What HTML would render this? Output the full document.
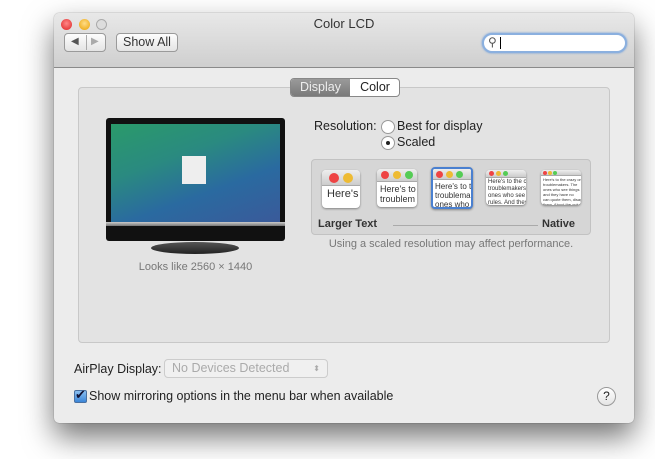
<!DOCTYPE html>
<html><head><style>
*{margin:0;padding:0;box-sizing:border-box}
body{width:655px;height:459px;background:#fff;font-family:"Liberation Sans",sans-serif;position:relative;overflow:hidden;font-size:12px;color:#222}
.abs{position:absolute}
.win{left:54px;top:13px;width:580px;height:410px;background:#ececec;border-radius:5px;box-shadow:0 14px 30px rgba(0,0,0,.55),0 0 1px rgba(0,0,0,.5);overflow:hidden}
.tb{left:0;top:0;width:580px;height:55px;background:linear-gradient(#e8e8e8,#cfcfcf);border-bottom:1px solid #8a8a8a}
.dot{width:12px;height:12px;border-radius:50%}
.btn{background:linear-gradient(#fdfdfd,#e4e4e4);border:1px solid #9a9a9a;border-radius:4px}
.thumb{background:#fff;border-radius:4px;box-shadow:0 1px 2px rgba(0,0,0,.4);overflow:hidden;font-size:9px;line-height:10px;color:#333}
.thumb .bar{height:11px;background:linear-gradient(#eee,#ccc);border-bottom:1px solid #aaa;position:relative}
.thumb .txt{white-space:nowrap}
.r{background:#e44}.y{background:#eb3}.g{background:#5c5}
.bar i{position:absolute;border-radius:50%}
</style></head><body>
<div class="abs win">
 <div class="abs tb">
  <div class="abs dot" style="left:7px;top:6px;width:11px;height:11px;background:radial-gradient(circle at 50% 40%,#f88,#d22)"></div>
  <div class="abs dot" style="left:25px;top:6px;width:11px;height:11px;background:radial-gradient(circle at 50% 40%,#fd8,#e9a000)"></div>
  <div class="abs dot" style="left:42px;top:6px;width:11px;height:11px;border:1px solid #aaa;background:#ddd"></div>
  <div class="abs" style="left:0;width:580px;top:3px;text-align:center;font-size:13px;color:#333">Color LCD</div>
  <div class="abs btn" style="left:10px;top:20px;width:42px;height:19px"><span class="abs" style="left:6px;top:2px;font-size:10px;color:#555">◀</span><span class="abs" style="left:21px;top:1px;width:1px;height:15px;background:#aaa"></span><span class="abs" style="left:26px;top:2px;font-size:10px;color:#aaa">▶</span></div>
  <div class="abs btn" style="left:62px;top:20px;width:62px;height:19px;font-size:12.5px;text-align:center;line-height:17px;color:#333">Show All</div>
  <div class="abs" style="left:428px;top:20px;width:145px;height:20px;border-radius:10px;background:#fff;border:2px solid #8bb0df;box-shadow:0 0 2px #6a9ad8"><span class="abs" style="left:4px;top:0px;font-size:12px;color:#555">&#9906;</span><span class="abs" style="left:16px;top:2px;width:1px;height:12px;background:#000"></span></div>
 </div>
 <div class="abs" style="left:24px;top:74px;width:532px;height:256px;background:#e3e3e3;border:1px solid #c8c8c8;border-radius:4px"></div>
 <div class="abs" style="left:236px;top:65px;width:110px;height:19px;border-radius:4px;border:1px solid #888;background:#fff;overflow:hidden;font-size:12.5px;line-height:17px">
  <div class="abs" style="left:0;top:0;width:59px;height:17px;background:linear-gradient(#9a9a9a,#7a7a7a);color:#eee;text-align:center">Display</div>
  <div class="abs" style="left:59px;top:0;width:50px;height:17px;text-align:center;color:#222">Color</div>
 </div>
 <!-- monitor -->
 <div class="abs" style="left:52px;top:105px;width:179px;height:123px;background:#111;border-radius:3px"></div>
 <div class="abs" style="left:57px;top:111px;width:169px;height:98px;background:linear-gradient(160deg,#2a9a6a 0%,#2a8a80 35%,#2a6aa0 65%,#3a5a9a 100%)"></div>
 <div class="abs" style="left:128px;top:143px;width:24px;height:28px;background:#eee"></div>
 <div class="abs" style="left:52px;top:209px;width:179px;height:4px;background:linear-gradient(#ccc,#777)"></div>
 <div class="abs" style="left:97px;top:229px;width:88px;height:12px;border-radius:50%;background:linear-gradient(#555,#222)"></div>
 <div class="abs" style="left:52px;top:248px;width:179px;text-align:center;font-size:11px;color:#777">Looks like 2560 × 1440</div>
 <!-- resolution -->
 <div class="abs" style="left:260px;top:106px;font-size:12.5px">Resolution:</div>
 <div class="abs" style="left:327px;top:107px;width:14px;height:14px;border-radius:50%;border:1px solid #999;background:#fff"></div>
 <div class="abs" style="left:343px;top:106px;font-size:12.5px">Best for display</div>
 <div class="abs" style="left:327px;top:123px;width:14px;height:14px;border-radius:50%;border:1px solid #999;background:#fff"><div class="abs" style="left:4px;top:4px;width:4px;height:4px;border-radius:50%;background:#222"></div></div>
 <div class="abs" style="left:343px;top:122px;font-size:12.5px">Scaled</div>
 <div class="abs" style="left:257px;top:146px;width:280px;height:76px;background:#d6d6d6;border:1px solid #c2c2c2;border-radius:4px">
  <div class="abs thumb" style="left:10px;top:10px;width:38px;height:38px"><div class="bar" style="height:16px"><i class="r" style="left:7px;top:3px;width:10px;height:10px"></i><i class="y" style="left:21px;top:3px;width:10px;height:10px"></i></div><div class="txt" style="padding:3px 5px;font-size:11px">Here's</div></div>
  <div class="abs thumb" style="left:65px;top:9px;width:40px;height:38px"><div class="bar" style="height:13px"><i class="r" style="left:4px;top:2px;width:8px;height:8px"></i><i class="y" style="left:16px;top:2px;width:8px;height:8px"></i><i class="g" style="left:28px;top:2px;width:8px;height:8px"></i></div><div class="txt" style="padding:2px 3px">Here's to<br>troublem</div></div>
  <div class="abs thumb" style="left:119px;top:7px;width:42px;height:42px;border:2px solid #4a80d0"><div class="bar"><i class="r" style="left:3px;top:2px;width:7px;height:7px"></i><i class="y" style="left:13px;top:2px;width:7px;height:7px"></i><i class="g" style="left:23px;top:2px;width:7px;height:7px"></i></div><div class="txt" style="padding:2px 2px;font-size:8px;line-height:9px">Here's to th<br>troublemak<br>ones who</div></div>
  <div class="abs thumb" style="left:174px;top:10px;width:40px;height:35px"><div class="bar" style="height:8px"><i class="r" style="left:3px;top:1px;width:5px;height:5px"></i><i class="y" style="left:10px;top:1px;width:5px;height:5px"></i><i class="g" style="left:17px;top:1px;width:5px;height:5px"></i></div><div class="txt" style="padding:1px 2px;font-size:6px;line-height:7px">Here's to the c<br>troublemakers.<br>ones who see t<br>rules. And they</div></div>
  <div class="abs thumb" style="left:229px;top:10px;width:40px;height:35px"><div class="bar" style="height:6px"><i class="r" style="left:2px;top:1px;width:4px;height:4px"></i><i class="y" style="left:7px;top:1px;width:4px;height:4px"></i><i class="g" style="left:12px;top:1px;width:4px;height:4px"></i></div><div class="txt" style="padding:1px 2px;font-size:4px;line-height:5px">Here's to the crazy ones<br>troublemakers. The<br>ones who see things<br>and they have no<br>can quote them, disag<br>them. About the only<br>because they change</div></div>
  <div class="abs" style="left:6px;top:58px;font-size:11px;font-weight:bold;color:#333">Larger Text</div>
  <div class="abs" style="left:81px;top:65px;width:145px;height:1px;background:#aaa"></div>
  <div class="abs" style="left:230px;top:58px;font-size:11px;font-weight:bold;color:#333">Native</div>
 </div>
 <div class="abs" style="left:257px;top:225px;width:280px;text-align:center;font-size:11px;color:#777">Using a scaled resolution may affect performance.</div>
 <!-- bottom -->
 <div class="abs" style="left:20px;top:349px;font-size:12.5px">AirPlay Display:</div>
 <div class="abs" style="left:110px;top:346px;width:164px;height:19px;border:1px solid #ccc;border-radius:4px;background:#f0f0f0;font-size:12.5px;color:#aaa;line-height:17px;padding-left:7px">No Devices Detected<span class="abs" style="right:7px;top:0;font-size:8px">⬍</span></div>
 <div class="abs" style="left:20px;top:377px;width:13px;height:13px;border-radius:2px;background:linear-gradient(#8cc0f0,#3a85d8);border:1px solid #4a70a0"><span class="abs" style="left:0;top:-4px;font-size:13px;color:#113">✔</span></div>
 <div class="abs" style="left:35px;top:376px;font-size:12.5px">Show mirroring options in the menu bar when available</div>
 <div class="abs" style="left:543px;top:374px;width:19px;height:19px;border-radius:50%;border:1px solid #999;background:linear-gradient(#fff,#e4e4e4);text-align:center;font-size:12px;line-height:17px">?</div>
</div>
</body></html>
